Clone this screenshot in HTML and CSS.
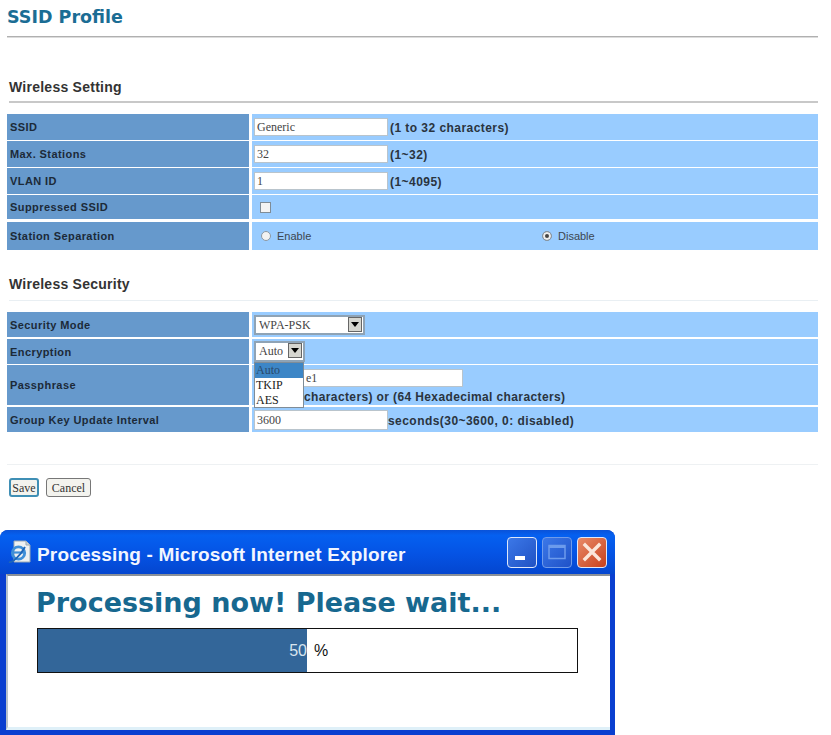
FILE: index.html
```html
<!DOCTYPE html>
<html lang="en">
<head>
<meta charset="utf-8">
<title>SSID Profile</title>
<link rel="stylesheet" href="styles.css">
</head>
<body>
<main class="page">
  <h1 class="page-title">SSID Profile</h1>

  <h2 class="section-title">Wireless Setting</h2>
  <div class="form-table">
    <div class="row h26">
      <div class="label">SSID</div>
      <div class="value"><span class="text-input"><span class="serif">Generic</span></span><span class="hint">(1 to 32 characters)</span></div>
    </div>
    <div class="row h26">
      <div class="label">Max. Stations</div>
      <div class="value"><span class="text-input"><span class="serif">32</span></span><span class="hint">(1~32)</span></div>
    </div>
    <div class="row h26">
      <div class="label">VLAN ID</div>
      <div class="value"><span class="text-input"><span class="serif">1</span></span><span class="hint">(1~4095)</span></div>
    </div>
    <div class="row h24">
      <div class="label">Suppressed SSID</div>
      <div class="value"><span class="checkbox"></span></div>
    </div>
    <div class="row h28 gap-2">
      <div class="label">Station Separation</div>
      <div class="value radios">
        <span class="radio-cell first"><span class="radio"></span><span class="radio-text">Enable</span></span>
        <span class="radio-cell"><span class="radio checked"></span><span class="radio-text">Disable</span></span>
      </div>
    </div>
  </div>

  <h2 class="section-title faint">Wireless Security</h2>
  <div class="form-table">
    <div class="row h25">
      <div class="label">Security Mode</div>
      <div class="value"><span class="select wide"><span class="serif">WPA-PSK</span><span class="arrow"></span></span></div>
    </div>
    <div class="row h25 gap-1">
      <div class="label">Encryption</div>
      <div class="value encryption">
        <span class="select narrow"><span class="serif">Auto</span><span class="arrow"></span></span>
        <div class="dropdown">
          <div class="option active">Auto</div>
          <div class="option">TKIP</div>
          <div class="option">AES</div>
        </div>
      </div>
    </div>
    <div class="row h40">
      <div class="label">Passphrase</div>
      <div class="value stacked">
        <span class="text-input pass"><span class="serif">e1</span></span>
        <span class="hint after-list">characters) or (64 Hexadecimal characters)</span>
      </div>
    </div>
    <div class="row h25 gap-1">
      <div class="label">Group Key Update Interval</div>
      <div class="value"><span class="text-input tall"><span class="serif">3600</span></span><span class="hint tight">seconds(30~3600, 0: disabled)</span></div>
    </div>
  </div>

  <div class="actions">
    <button class="btn default" type="button">Save</button>
    <button class="btn" type="button">Cancel</button>
  </div>
</main>

<section class="window">
  <header class="titlebar">
    <svg class="ie-icon" width="23" height="25" viewBox="0 0 23 25" aria-hidden="true">
      <path d="M6 1h12l4 4v17H6z" fill="#eef1f2" stroke="#9aa7b2"/>
      <path d="M18 1v4h4" fill="#c9d2d9" stroke="#9aa7b2"/>
      <circle cx="10.5" cy="13" r="6.2" fill="none" stroke="#3f8fd8" stroke-width="2.8"/>
      <path d="M5 12.5h11" stroke="#3f8fd8" stroke-width="2.2"/>
      <path d="M1 22c3 1.5 11-6 16-15" fill="none" stroke="#1f66b8" stroke-width="1.8"/>
    </svg>
    <span class="window-title">Processing - Microsoft Internet Explorer</span>
    <div class="window-controls">
      <span class="ctl ctl-min"><svg width="28" height="28" viewBox="0 0 28 28"><rect x="7" y="18" width="10" height="4" fill="#fff"/></svg></span>
      <span class="ctl ctl-max"><svg width="28" height="28" viewBox="0 0 28 28"><path d="M6 7.5h16v13H6z" fill="none" stroke="#6d9bec" stroke-width="1.5"/><path d="M6 8.5h16" stroke="#6d9bec" stroke-width="3"/></svg></span>
      <span class="ctl ctl-close"><svg width="28" height="28" viewBox="0 0 28 28"><path d="M7 7l14 14M21 7L7 21" stroke="#fbe6da" stroke-width="3.4" stroke-linecap="square"/></svg></span>
    </div>
  </header>
  <div class="window-body">
    <h2 class="processing">Processing now! Please wait...</h2>
    <div class="progress">
      <div class="progress-fill">50</div>
      <span class="progress-unit">%</span>
    </div>
  </div>
</section>
</body>
</html>
```

FILE: styles.css
```css
* { box-sizing: border-box; }
html, body { margin: 0; padding: 0; background: #fff; }
body { width: 831px; height: 735px; overflow: hidden; font-family: "Liberation Sans", Arial, sans-serif; color: #222; }

.page { padding: 0 13px 0 7px; height: 530px; }

.page-title {
  margin: 0;
  height: 37px;
  padding-top: 8px;
  font: bold 17.5px/18px "DejaVu Sans", Verdana, sans-serif;
  color: #1b6d94;
  border-bottom: 1px solid #b0b0b0;
  box-shadow: 0 1px 0 #dcdcdc;
}

.section-title {
  margin: 41px 0 11px 2px;
  height: 25px;
  padding-top: 1px;
  font: bold 14px/17px "Liberation Sans", Arial, sans-serif;
  letter-spacing: 0.25px;
  color: #333;
  border-bottom: 2px solid #c8c8c8;
}
.section-title.faint { margin-top: 25px; height: 26px; border-bottom: 1px solid #e9eff3; }

.form-table { display: flex; flex-direction: column; gap: 1px; }
.row { display: flex; gap: 3px; }
.h24 { height: 24px; }
.h25 { height: 25px; }
.h26 { height: 26px; }
.h28 { height: 28px; }
.h40 { height: 40px; }
.gap-1 { margin-top: 1px; }
.gap-2 { margin-top: 2px; }

.label {
  width: 242px;
  flex: none;
  display: flex;
  align-items: center;
  padding-left: 3px;
  background: #6699cc;
  font: bold 11px/14px "Liberation Sans", Arial, sans-serif;
  letter-spacing: 0.42px;
  color: #1c2a38;
}
.value {
  flex: 1;
  display: flex;
  align-items: center;
  padding-left: 2px;
  background: #99ccff;
  position: relative;
}
.serif { font: 12px/16px "Liberation Serif", "Times New Roman", serif; color: #444; }

.text-input {
  width: 134px;
  height: 18px;
  flex: none;
  display: flex;
  align-items: center;
  padding-left: 2px;
  background: #fff;
  border: 1px solid #b9c4cc;
}
.text-input.tall { height: 20px; }
.hint {
  margin-left: 2px;
  padding-top: 2px;
  font: bold 12px/14px "Liberation Sans", Arial, sans-serif;
  letter-spacing: 0.45px;
  color: #2a3440;
}
.hint.tight { margin-left: 0; }
.hint.after-list { margin-left: 50px; padding-top: 0; letter-spacing: 0.38px; white-space: nowrap; }

.checkbox {
  width: 11px;
  height: 11px;
  margin-left: 6px;
  background: #f4f4f4;
  border: 1px solid #7f8c97;
}

.radios { padding-left: 0; }
.radio-cell { display: flex; align-items: center; padding-left: 9px; gap: 6px; }
.radio-cell.first { width: 281px; }
.radio {
  width: 10px;
  height: 10px;
  border-radius: 50%;
  background: #f2f2f2;
  border: 1px solid #8b98a3;
}
.radio.checked { background: #444; box-shadow: inset 0 0 0 2px #eee; }
.radio-text { font: 11px/14px "Liberation Sans", Arial, sans-serif; color: #3c4650; }

.select {
  display: flex;
  align-items: center;
  justify-content: space-between;
  height: 20px;
  background: #fff;
  border: 2px solid #8fa3b5;
  padding: 0 1px 0 3px;
}
.select.wide { width: 111px; }
.select.narrow { width: 51px; height: 21px; padding-bottom: 1px; margin-top: -1px; }
.arrow {
  width: 14px;
  height: 15px;
  position: relative;
  background: #d6d6d0;
  border: 1px solid #666;
}
.arrow::after {
  content: "";
  position: absolute;
  left: 2px;
  top: 4px;
  border: 4px solid transparent;
  border-top: 5px solid #000;
  border-bottom: 0;
}

.encryption { z-index: 2; }
.dropdown {
  position: absolute;
  left: 2px;
  top: 23px;
  width: 50px;
  height: 46px;
  background: #fff;
  border: 1px solid #7f8c97;
}
.option { font: 12px/15px "Liberation Serif", "Times New Roman", serif; padding-left: 1px; color: #222; }
.option.active { background: #3d86c6; color: #2b4a6a; }

.stacked { flex-direction: column; align-items: flex-start; justify-content: flex-start; padding-top: 4px; gap: 3px; }
.text-input.pass { width: 209px; padding-left: 51px; }

.actions {
  margin-top: 32px;
  padding: 13px 0 0 2px;
  border-top: 1px solid #eef1f3;
  display: flex;
  gap: 7px;
}
.btn {
  height: 19px;
  padding: 0;
  font: 12px/14px "Liberation Serif", "Times New Roman", serif;
  color: #333;
  background: #f3f3ee;
  border: 1px solid #777;
  border-radius: 3px;
}
.btn.default { width: 30px; border: 2px solid #3f8fb5; }
.btn:not(.default) { width: 45px; }

.window {
  width: 615px;
  height: 205px;
  display: flex;
  flex-direction: column;
  background: #0a3fd0;
  border-radius: 8px 8px 0 0;
  padding: 0 5px 5px 6px;
}
.titlebar {
  height: 44px;
  flex: none;
  display: flex;
  align-items: center;
  gap: 6px;
  margin: 0 -5px 0 -6px;
  padding: 0 8px 0 8px;
  border-radius: 8px 8px 0 0;
  background: linear-gradient(#0a52d8 0, #0560f0 12%, #0553e4 55%, #0446cf 100%);
}
.ie-icon { flex: none; }
.window-title {
  flex: 1;
  padding-top: 5px;
  font: bold 19px/24px "Liberation Sans", Arial, sans-serif;
  letter-spacing: 0.16px;
  color: #f2f6ff;
  white-space: nowrap;
}
.window-controls { display: flex; gap: 5px; }
.ctl {
  width: 30px;
  height: 31px;
  border: 1px solid #dfe8fa;
  border-radius: 4px;
  display: flex;
  align-items: center;
  justify-content: center;
}
.ctl-min { background: linear-gradient(135deg, #3c78e8, #2052c4); }
.ctl-max { background: linear-gradient(135deg, #3c78e8, #1f52c8); border-color: #6f9bea; }
.ctl-close { background: linear-gradient(135deg, #e88a68, #c8401c); }

.window-body {
  flex: 1;
  background: #fff;
  border-top: 2px solid #8a9098;
  border-left: 2px solid #b8c2cc;
  border-bottom: 3px solid #dff0f8;
  padding: 0 0 0 28px;
}
.processing {
  margin: 0;
  padding-top: 9px;
  height: 52px;
  font: bold 27px/36px "DejaVu Sans", Verdana, sans-serif;
  color: #17688f;
  white-space: nowrap;
}
.progress {
  width: 541px;
  height: 45px;
  margin-left: 1px;
  display: flex;
  align-items: center;
  background: #fff;
  border: 1px solid #111;
}
.progress-fill {
  width: 269px;
  height: 100%;
  flex: none;
  background: #336699;
  color: #d8e4ee;
  text-align: right;
  font: 16px/43px "Liberation Sans", Arial, sans-serif;
}
.progress-unit { margin-left: 7px; font: 16px/20px "Liberation Sans", Arial, sans-serif; color: #111; }
```
